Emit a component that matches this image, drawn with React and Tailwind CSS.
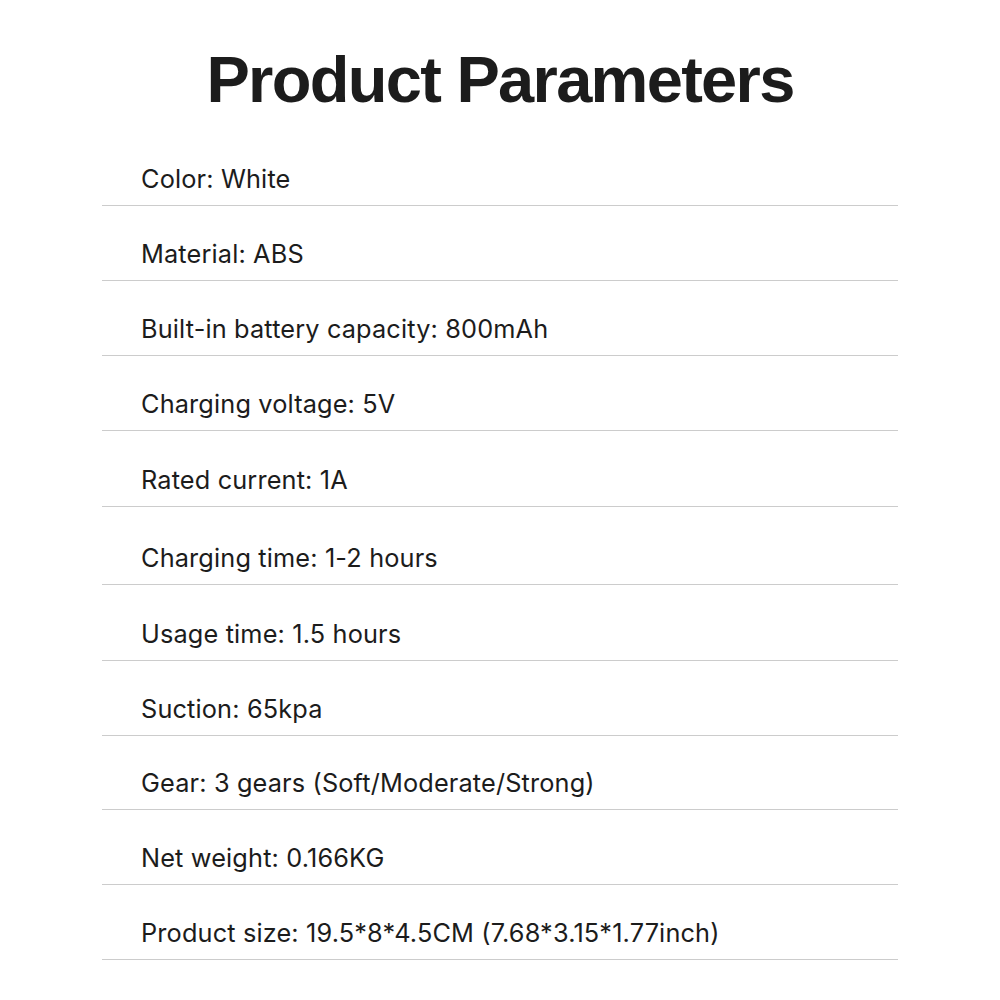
const rows = [
    { text: 'Color: White', h: 75 },
    { text: 'Material: ABS', h: 75 },
    { text: 'Built-in battery capacity: 800mAh', h: 75 },
    { text: 'Charging voltage: 5V', h: 75 },
    { text: 'Rated current: 1A', h: 76 },
    { text: 'Charging time: 1-2 hours', h: 78 },
    { text: 'Usage time: 1.5 hours', h: 76 },
    { text: 'Suction: 65kpa', h: 75 },
    { text: 'Gear: 3 gears (Soft/Moderate/Strong)', h: 74 },
    { text: 'Net weight: 0.166KG', h: 75 },
    { text: 'Product size: 19.5*8*4.5CM (7.68*3.15*1.77inch)', h: 75 },
]

export default function App() {
    return (
        <div className="w-[1000px] h-[1000px] bg-white text-[#1c1c1c] font-['Inter','Noto_Sans',sans-serif]">
            {/* Title */}
            <div className="h-[131px] flex items-start justify-center pt-[44px]">
                <h1 className="text-[65px] leading-[72px] font-bold tracking-[-1.7px] font-['Liberation_Sans',sans-serif]">
                    Product Parameters
                </h1>
            </div>

            {/* Rows */}
            <div className="mx-[102px] w-[796px]">
                {rows.map((r) => (
                    <div
                        key={r.text}
                        style={{ height: r.h }}
                        className="border-b border-[#cccccc] flex items-end pb-[10px] pl-[39px]"
                    >
                        <span className="text-[25.3px] leading-[32px] tracking-[0.15px]">{r.text}</span>
                    </div>
                ))}
            </div>
        </div>
    )
}
